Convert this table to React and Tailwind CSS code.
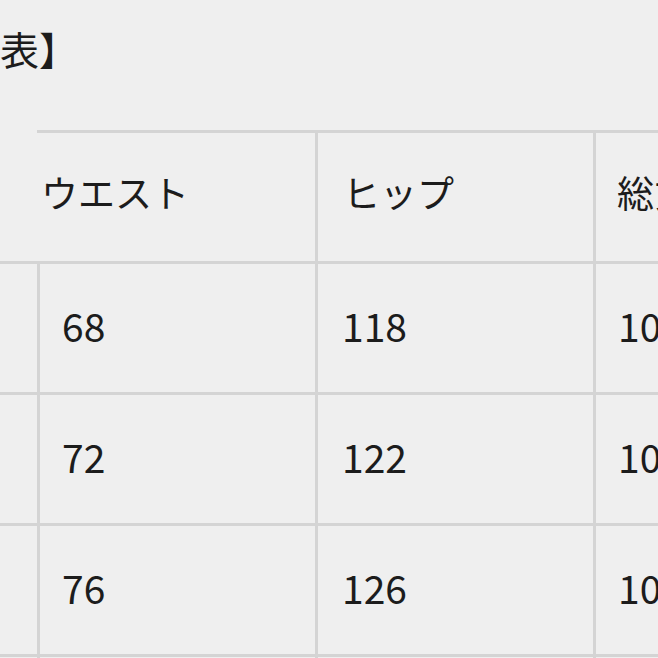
export default function App() {
  const font = { fontFamily: '"Noto Sans CJK JP", "Noto Sans", sans-serif' };
  const rows = [
    ["68", "118", "10"],
    ["72", "122", "10"],
    ["76", "126", "10"],
  ];
  return (
    <div className="w-[658px] h-[658px] overflow-hidden bg-[#efefef] text-[#1c1c1c] flex flex-col" style={font}>
      <div className="h-[130px] shrink-0 pt-[23px] text-[39px] leading-[50px] whitespace-nowrap">表】</div>
      <div className="h-[131px] shrink-0 flex">
        <div className="w-[37px] shrink-0"></div>
        <div className="w-[278px] shrink-0 border-t-[3px] border-[#d4d4d4] flex items-center pl-[4px] pb-[8px] text-[37px]">ウエスト</div>
        <div className="w-[278px] shrink-0 border-t-[3px] border-l-[3px] border-[#d4d4d4] flex items-center pl-[25px] pb-[8px] text-[37px]">ヒップ</div>
        <div className="flex-1 border-t-[3px] border-l-[3px] border-[#d4d4d4] flex items-center pl-[21px] pb-[8px] text-[37px] whitespace-nowrap overflow-hidden">総丈</div>
      </div>
      {rows.map((r, i) => (
        <div key={i} className="h-[131px] shrink-0 flex border-t-[3px] border-[#d4d4d4]">
          <div className="w-[37px] shrink-0"></div>
          <div className="w-[278px] shrink-0 border-l-[3px] border-[#d4d4d4] flex items-center pl-[22px] pb-[6px] text-[39px]">{r[0]}</div>
          <div className="w-[278px] shrink-0 border-l-[3px] border-[#d4d4d4] flex items-center pl-[24px] pb-[6px] text-[39px]">{r[1]}</div>
          <div className="flex-1 border-l-[3px] border-[#d4d4d4] flex items-center pl-[22px] pb-[6px] text-[39px] whitespace-nowrap overflow-hidden">{r[2]}</div>
        </div>
      ))}
      <div className="h-[10px] shrink-0 border-t-[3px] border-[#d4d4d4] flex">
        <div className="w-[37px] shrink-0"></div>
        <div className="w-[278px] shrink-0 border-l-[3px] border-[#d4d4d4]"></div>
        <div className="w-[278px] shrink-0 border-l-[3px] border-[#d4d4d4]"></div>
        <div className="flex-1 border-l-[3px] border-[#d4d4d4]"></div>
      </div>
    </div>
  );
}
